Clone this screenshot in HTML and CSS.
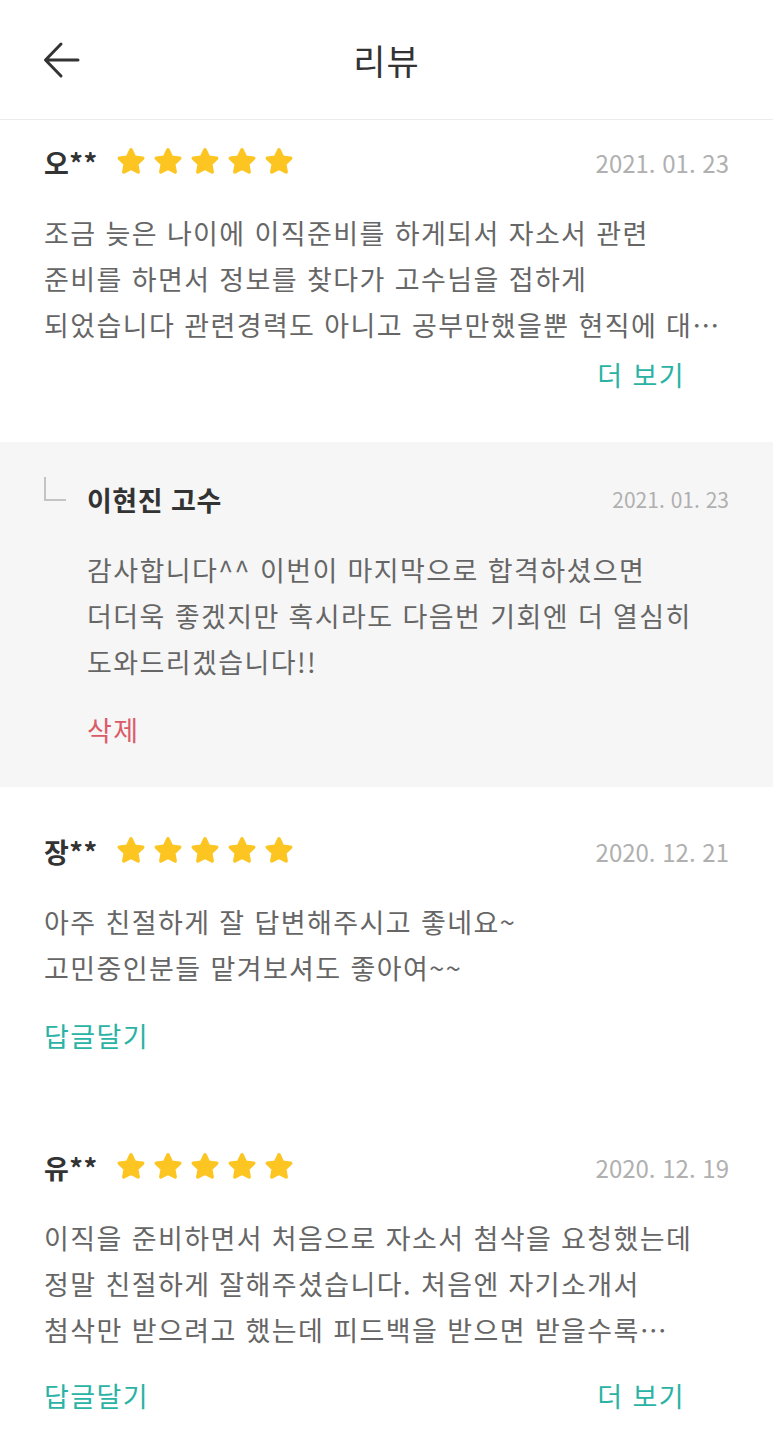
FILE: index.html
```html
<!doctype html>
<html lang="ko">
<head>
  <meta charset="utf-8">
  <title>리뷰</title>
  <link rel="stylesheet" href="styles.css">
</head>
<body>
  <svg width="0" height="0" class="defs">
    <symbol id="star" viewBox="0 0 24 24">
      <path d="M12 2.8l2.7 5.6 6.1.8-4.5 4.2 1.1 6.1L12 16.6l-5.4 2.9 1.1-6.1-4.5-4.2 6.1-.8z" fill="#fcc521" stroke="#fcc521" stroke-width="2.6" stroke-linejoin="round"/>
    </symbol>
  </svg>

  <header class="topbar">
    <a class="back" href="#">
      <svg width="40" height="40" viewBox="0 0 40 40"><path d="M36 20H4M19 4L3.5 20 19 36" fill="none" stroke="#333" stroke-width="3" stroke-linecap="round" stroke-linejoin="round"/></svg>
    </a>
    <h1>리뷰</h1>
  </header>

  <section class="review first">
    <div class="head">
      <span class="name">오**</span>
      <span class="stars">
        <svg><use href="#star"/></svg><svg><use href="#star"/></svg><svg><use href="#star"/></svg><svg><use href="#star"/></svg><svg><use href="#star"/></svg>
      </span>
      <span class="date">2021. 01. 23</span>
    </div>
    <p class="body">조금 늦은 나이에 이직준비를 하게되서 자소서 관련<br>준비를 하면서 정보를 찾다가 고수님을 접하게<br>되었습니다 관련경력도 아니고 공부만했을뿐 현직에 대…</p>
    <div class="actions only-more">
      <a class="more" href="#">더 보기</a>
    </div>
  </section>

  <section class="reply">
    <div class="head">
      <span class="corner"></span>
      <span class="name">이현진 고수</span>
      <span class="date">2021. 01. 23</span>
    </div>
    <p class="body">감사합니다^^ 이번이 마지막으로 합격하셨으면<br>더더욱 좋겠지만 혹시라도 다음번 기회엔 더 열심히<br>도와드리겠습니다!!</p>
    <a class="delete" href="#">삭제</a>
  </section>

  <section class="review">
    <div class="head">
      <span class="name">장**</span>
      <span class="stars">
        <svg><use href="#star"/></svg><svg><use href="#star"/></svg><svg><use href="#star"/></svg><svg><use href="#star"/></svg><svg><use href="#star"/></svg>
      </span>
      <span class="date">2020. 12. 21</span>
    </div>
    <p class="body">아주 친절하게 잘 답변해주시고 좋네요~<br>고민중인분들 맡겨보셔도 좋아여~~</p>
    <div class="actions">
      <a class="answer" href="#">답글달기</a>
    </div>
  </section>

  <section class="review">
    <div class="head">
      <span class="name">유**</span>
      <span class="stars">
        <svg><use href="#star"/></svg><svg><use href="#star"/></svg><svg><use href="#star"/></svg><svg><use href="#star"/></svg><svg><use href="#star"/></svg>
      </span>
      <span class="date">2020. 12. 19</span>
    </div>
    <p class="body">이직을 준비하면서 처음으로 자소서 첨삭을 요청했는데<br>정말 친절하게 잘해주셨습니다. 처음엔 자기소개서<br>첨삭만 받으려고 했는데 피드백을 받으면 받을수록…</p>
    <div class="actions last">
      <a class="answer" href="#">답글달기</a>
      <a class="more" href="#">더 보기</a>
    </div>
  </section>
</body>
</html>
```

FILE: styles.css
```css
body { margin: 0; background: #fff; font-family: "Noto Sans CJK KR", "Noto Sans", sans-serif; color: #333; overflow: hidden; }
a { text-decoration: none; }
.defs { position: absolute; }

.topbar { height: 119px; border-bottom: 1px solid #ececec; display: flex; align-items: center; justify-content: center; position: relative; }
.topbar h1 { margin: 0; font-size: 35px; font-weight: 400; letter-spacing: 1px; color: #333; }
.back { position: absolute; left: 42px; top: 40px; display: flex; }

.review { padding: 44px 44px 48px; }
.review.first { padding-top: 22px; }

.head { display: flex; align-items: center; height: 40px; }
.name { font-size: 27px; font-weight: 700; color: #333; letter-spacing: 0.5px; }
.stars { display: flex; gap: 5px; margin-left: 17px; }
.stars svg { width: 32px; height: 32px; }
.date { margin-left: auto; font-size: 24px; color: #b0b0b0; }

.body { margin: 28px 0 0; font-size: 27px; line-height: 46px; color: #666; letter-spacing: 1.4px; white-space: nowrap; }

.actions { display: flex; align-items: center; height: 40px; margin-top: 24px; font-size: 27px; letter-spacing: 1.4px; }
.actions.only-more { margin-top: 6px; }
.actions.last { margin-top: 22px; }
.answer { color: #2ab3a5; }
.more { color: #2ab3a5; margin-left: auto; margin-right: 44px; }

.reply { background: #f6f6f6; padding: 37px 44px; }
.reply .head { position: relative; padding-left: 43px; }
.corner { position: absolute; left: 0; top: -2px; width: 20px; height: 22px; border-left: 2px solid #c4c4c4; border-bottom: 2px solid #c4c4c4; }
.reply .date { font-size: 21px; }
.reply .body { margin-left: 43px; }
.delete { display: block; margin: 25px 0 0 43px; height: 40px; line-height: 40px; font-size: 27px; letter-spacing: 1.4px; color: #dc5b68; }
```
